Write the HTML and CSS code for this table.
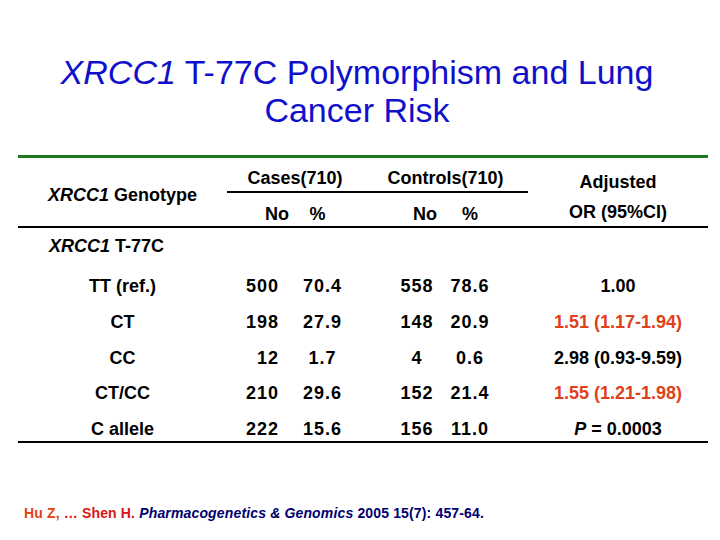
FILE: index.html
```html
<!DOCTYPE html>
<html>
<head>
<meta charset="utf-8">
<link rel="stylesheet" href="styles.css">
</head>
<body>
<h1 class="title"><i>XRCC1</i> T-77C Polymorphism and Lung<br>Cancer Risk</h1>
<div class="table">
  <div class="head">
    <div class="genotype-h"><i>XRCC1</i> Genotype</div>
    <div class="groups">
      <span class="grp grp-cases">Cases(710)</span>
      <span class="grp grp-controls">Controls(710)</span>
    </div>
    <div class="sub c2 sub-cno">No</div>
    <div class="sub c3 sub-cpct">%</div>
    <div class="sub c5 sub-kno">No</div>
    <div class="sub c6">%</div>
    <div class="or-h"><span>Adjusted</span><span>OR (95%CI)</span></div>
  </div>
  <div class="section"><i>XRCC1</i> T-77C</div>
  <div class="row">
    <div class="c1">TT (ref.)</div><div class="c2 num">500</div><div class="c3 num">70.4</div>
    <div class="c5 num">558</div><div class="c6 num">78.6</div><div class="c8">1.00</div>
  </div>
  <div class="row">
    <div class="c1">CT</div><div class="c2 num">198</div><div class="c3 num">27.9</div>
    <div class="c5 num">148</div><div class="c6 num">20.9</div><div class="c8 hl">1.51 (1.17-1.94)</div>
  </div>
  <div class="row">
    <div class="c1">CC</div><div class="c2 num">12</div><div class="c3 num">1.7</div>
    <div class="c5 num">4</div><div class="c6 num">0.6</div><div class="c8">2.98 (0.93-9.59)</div>
  </div>
  <div class="row">
    <div class="c1">CT/CC</div><div class="c2 num">210</div><div class="c3 num">29.6</div>
    <div class="c5 num">152</div><div class="c6 num">21.4</div><div class="c8 hl">1.55 (1.21-1.98)</div>
  </div>
  <div class="row last">
    <div class="c1">C allele</div><div class="c2 num">222</div><div class="c3 num">15.6</div>
    <div class="c5 num">156</div><div class="c6 num">11.0</div><div class="c8"><i>P</i> = 0.0003</div>
  </div>
</div>
<p class="cite"><span class="au1">Hu Z,</span> <span class="au2">… Shen H.</span> <i>Pharmacogenetics &amp; Genomics</i> 2005 15(7): 457-64.</p>
</body>
</html>
```
FILE: styles.css
```css
html, body {
  margin: 0;
  padding: 0;
  background: #fff;
}
body {
  width: 720px;
  height: 540px;
  overflow: hidden;
  font-family: "Liberation Sans", Arial, sans-serif;
}
.title {
  margin: 0;
  padding: 53px 6px 0 0;
  font-size: 34px;
  line-height: 38px;
  font-weight: normal;
  color: #1010cc;
  text-align: center;
}
.table {
  margin: 26px 0 0 18px;
  width: 690px;
  border-top: 3px solid #1f7a1f;
  font-size: 18px;
  font-weight: bold;
  color: #000;
}
.head, .row {
  display: grid;
  grid-template-columns: 209px 63px 65px 30px 64px 42px 37px 180px;
}
.head {
  grid-template-rows: 35px 33px;
  border-bottom: 2px solid #000;
  line-height: 22px;
}
.genotype-h {
  grid-column: 1;
  grid-row: 1 / 3;
  align-self: center;
  padding-top: 6px;
  text-align: center;
}
.groups {
  grid-column: 2 / 8;
  grid-row: 1;
  display: grid;
  grid-template-columns: 136px 165px;
  border-bottom: 2px solid #000;
  padding-top: 9px;
}
.grp {
  text-align: center;
}
.sub {
  grid-row: 2;
  padding-top: 10px;
  text-align: center;
}
.sub-cno {
  text-align: right;
  padding-right: 1px;
}
.sub-cpct {
  padding-right: 10px;
}
.sub-kno {
  padding-left: 16px;
}
.or-h {
  grid-column: 8;
  grid-row: 1 / 3;
  display: flex;
  flex-direction: column;
  align-items: center;
  gap: 8px;
  padding-top: 13px;
}
.section {
  padding: 7px 0 11px 31px;
  line-height: 22px;
}
.row {
  line-height: 22px;
  padding-top: 7px;
  padding-bottom: 6.75px;
}
.row.last {
  padding-bottom: 1px;
  border-bottom: 2px solid #000;
}
.num { letter-spacing: 1px; }
.c1 { grid-column: 1; text-align: center; }
.c2 { grid-column: 2; text-align: right; padding-right: 11px; }
.c3 { grid-column: 3; text-align: center; }
.c5 { grid-column: 5; text-align: center; }
.c6 { grid-column: 6; text-align: center; }
.c8 { grid-column: 8; text-align: center; }
.head .c2 { padding-right: 1px; }
.hl { color: #e0401a; }
.cite {
  margin: 62px 0 0 24px;
  font-size: 14px;
  line-height: 16px;
  font-weight: bold;
  letter-spacing: 0.15px;
  color: #000070;
}
.au1 { color: #e04412; }
.au2 { color: #d81414; }
```
